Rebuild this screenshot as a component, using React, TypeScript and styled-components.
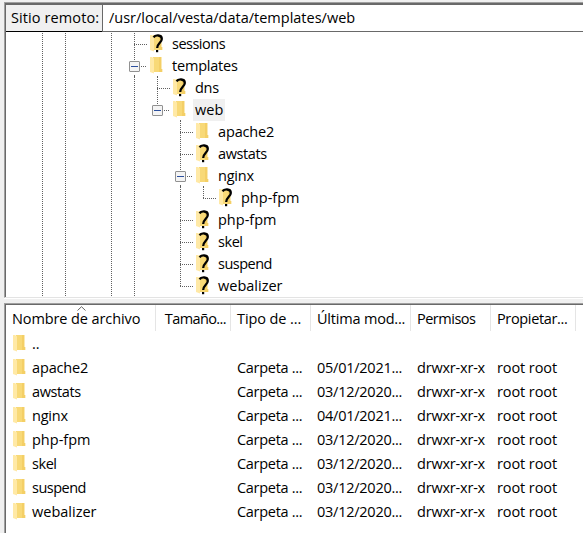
import React from "react";
import styled, { createGlobalStyle, css } from "styled-components";

const Global = createGlobalStyle`
  * { box-sizing: border-box; }
  body { margin: 0; background: #f0f0f0; overflow: hidden; }
`;

const Window = styled.main`
  display: flex;
  flex-direction: column;
  gap: 5px;
  width: 583px;
  height: 533px;
  padding: 2px 0 0 4px;
  overflow: hidden;
  background: #f0f0f0;
  color: #000;
  font: 14.5px/22px "Open Sans", "Segoe UI", sans-serif;
`;

const Panel = styled.section`
  border-top: 1px solid #a0a0a0;
  border-left: 1px solid #a0a0a0;
`;

const TreePanel = styled(Panel)`
  flex: none;
  height: 296px;
  border-bottom: 1px solid #e3e3e3;
  box-shadow: 0 1px 0 #fff;
`;

const ListPanel = styled(Panel)`
  flex: 1;
`;

const Inner = styled.div`
  height: 100%;
  border-left: 1px solid #696969;
  border-top: 1px solid #696969;
  background: #fff;
`;

const PathBar = styled.header`
  display: flex;
  height: 28px;
  border-top: 1px solid #696969;
`;

const PathLabel = styled.label`
  width: 96px;
  padding: 1px 0 0 5px;
  background: #f0f0f0;
  border-bottom: 1px solid #000;
  line-height: 24px;
  white-space: nowrap;
`;

const PathValue = styled.div`
  flex: 1;
  padding: 1px 0 0 6px;
  border-left: 1px solid #696969;
  border-bottom: 1px solid #696969;
  line-height: 24px;
  white-space: nowrap;
`;

const Tree = styled.div`
  height: 265px;
  padding: 1px 0 0 25px;
  overflow: hidden;
`;

const TreeRow = styled.div`
  display: flex;
  height: 22px;
`;

const Guide = styled.svg`
  flex: none;
  width: 23px;
  height: 22px;
  overflow: visible;
`;

const FolderSvg = styled.svg`
  flex: none;
  width: 16px;
  height: 22px;
  overflow: visible;
`;

const NodeIcon = styled.div`
  display: flex;
  margin: 0 4px 0 4px;
`;

const Tracked = styled.span<{ $tracking: number }>`
  white-space: pre;
  letter-spacing: ${(p) => p.$tracking}px;
`;

const NodeName = styled.span<{ $on?: boolean }>`
  padding: 0 2px;
  white-space: pre;
  ${(p) => p.$on && css`background: #f0f0f0;`}
`;

const columns = "150px 75px 80px 100px 80px 85px";

const HeadRow = styled.div`
  display: grid;
  grid-template-columns: ${columns};
  height: 26px;
`;

const HeadCell = styled.div<{ $end?: boolean }>`
  position: relative;
  padding: 3px 4px 0 6px;
  border-right: 1px solid #e5e5e5;
  text-align: ${(p) => (p.$end ? "right" : "left")};
  white-space: pre;
`;

const SortMark = styled.svg`
  position: absolute;
  left: 71px;
  top: 1px;
`;

const FileRow = styled.div`
  display: grid;
  grid-template-columns: ${columns};
  height: 24px;
  padding-top: 1px;
  line-height: 24px;
`;

const FileCell = styled.div`
  display: flex;
  height: 23px;
  padding-left: 6px;
  white-space: pre;
`;

const NameCell = styled(FileCell)`
  padding-left: 7px;
  gap: 3px;

  svg { margin-top: 1px; }
`;

const tracking: Record<string, number> = {
  sessions: -0.5,
  templates: -0.2,
  dns: -0.3,
  apache2: -0.15,
  awstats: -0.4,
  nginx: -0.2,
  skel: -0.45,
  suspend: -0.5,
  "Sitio remoto:": 0.1,
  "Nombre de archivo": -0.1,
  "Tamaño...": -0.6,
  "Tipo de ...": -0.1,
  "Última mod...": -0.2,
  Permisos: -0.5,
  "Propietar...": -0.35,
  "Carpeta ...": -0.3,
  "drwxr-xr-x": -0.2,
  "root root": -0.1,
};

function Label({ text }: { text: string }) {
  const isDate = /^\d\d\//.test(text);
  return <Tracked $tracking={isDate ? -0.25 : tracking[text] ?? 0}>{text}</Tracked>;
}

function Folder({ unknown }: { unknown?: boolean }) {
  return (
    <FolderSvg viewBox="0 0 16 22">
      <path d="M3 2H11.3V14H12.2V17H3Z" fill="#f8d977" />
      <path d="M9 2H11.3V14H12.2V17H9Z" fill="#f4cf66" />
      <path d="M0 2H2L4 3.5V18.5L0 17Z" fill="#ffe9a6" />
      {unknown && (
        <g>
          <path d="M3.6 4.4C5 1.9 11.9 1.3 11.8 5.9C11.7 9.6 7.3 10 7.2 15" fill="none" stroke="#000" strokeWidth="2.3" />
          <rect x="6" y="17" width="2.2" height="2.2" />
        </g>
      )}
    </FolderSvg>
  );
}

type Kind = "|" | " " | "+" | "L" | "-" | "_";

function Lines({ kind }: { kind: Kind }) {
  const dots = { stroke: "#606060", strokeWidth: 1, strokeDasharray: "1 1" };
  return (
    <Guide viewBox="0 0 23 22">
      {kind === "|" && <path d="M11.5 0V22" {...dots} />}
      {kind === "+" && <path d="M11.5 0V22M11 11.5H24" {...dots} />}
      {kind === "L" && <path d="M11.5 0V12M11 11.5H24" {...dots} />}
      {(kind === "-" || kind === "_") && (
        <>
          <path d="M11.5 0V6M18 11.5H24M34.5 21V22" {...dots} />
          {kind === "-" && <path d="M11.5 20V23" stroke="#606060" />}
          <rect x="6.5" y="6.5" width="10" height="10" rx="0.5" fill="#f4f4f4" stroke="#919191" />
          <path d="M8 11.5H15" stroke="#2b4f9e" />
        </>
      )}
    </Guide>
  );
}

interface Node { name: string; guides: string; unknown?: boolean; on?: boolean; }

const nodes: Node[] = [
  { name: "sessions", guides: "|| |+", unknown: true },
  { name: "templates", guides: "|| |-" },
  { name: "dns", guides: "|| ||+", unknown: true },
  { name: "web", guides: "|| ||_", on: true },
  { name: "apache2", guides: "|| || +" },
  { name: "awstats", guides: "|| || +", unknown: true },
  { name: "nginx", guides: "|| || -" },
  { name: "php-fpm", guides: "|| || |L", unknown: true },
  { name: "php-fpm", guides: "|| || +", unknown: true },
  { name: "skel", guides: "|| || +", unknown: true },
  { name: "suspend", guides: "|| || +", unknown: true },
  { name: "webalizer", guides: "|| || L", unknown: true },
];

const heads = ["Nombre de archivo", "Tamaño...", "Tipo de ...", "Última mod...", "Permisos", "Propietar..."];

const files: [string, string][] = [
  ["apache2", "05/01/2021..."],
  ["awstats", "03/12/2020..."],
  ["nginx", "04/01/2021..."],
  ["php-fpm", "03/12/2020..."],
  ["skel", "03/12/2020..."],
  ["suspend", "03/12/2020..."],
  ["webalizer", "03/12/2020..."],
];

export default function App() {
  return (
    <Window>
      <Global />
      <TreePanel>
        <Inner>
          <PathBar>
            <PathLabel><Label text="Sitio remoto:" /></PathLabel>
            <PathValue>/usr/local/vesta/data/templates/web</PathValue>
          </PathBar>
          <Tree>
            {nodes.map((n, i) => (
              <TreeRow key={i}>
                {n.guides.split("").map((k, j) => <Lines key={j} kind={k as Kind} />)}
                <NodeIcon><Folder unknown={n.unknown} /></NodeIcon>
                <NodeName $on={n.on}><Label text={n.name} /></NodeName>
              </TreeRow>
            ))}
          </Tree>
        </Inner>
      </TreePanel>
      <ListPanel>
        <Inner>
          <HeadRow>
            {heads.map((h, i) => (
              <HeadCell key={h} $end={i === 1}>
                <Label text={h} />
                {i === 0 && (
                  <SortMark width="9" height="5" viewBox="0 0 9 5">
                    <path d="M0.5 4.5L4.5 0.7L8.5 4.5" fill="none" stroke="#666" />
                  </SortMark>
                )}
              </HeadCell>
            ))}
          </HeadRow>
          <FileRow>
            <NameCell><Folder /><Label text=".." /></NameCell>
          </FileRow>
          {files.map(([name, date]) => (
            <FileRow key={name}>
              <NameCell><Folder /><Label text={name} /></NameCell>
              <FileCell />
              <FileCell><Label text="Carpeta ..." /></FileCell>
              <FileCell><Label text={date} /></FileCell>
              <FileCell><Label text="drwxr-xr-x" /></FileCell>
              <FileCell><Label text="root root" /></FileCell>
            </FileRow>
          ))}
        </Inner>
      </ListPanel>
    </Window>
  );
}
